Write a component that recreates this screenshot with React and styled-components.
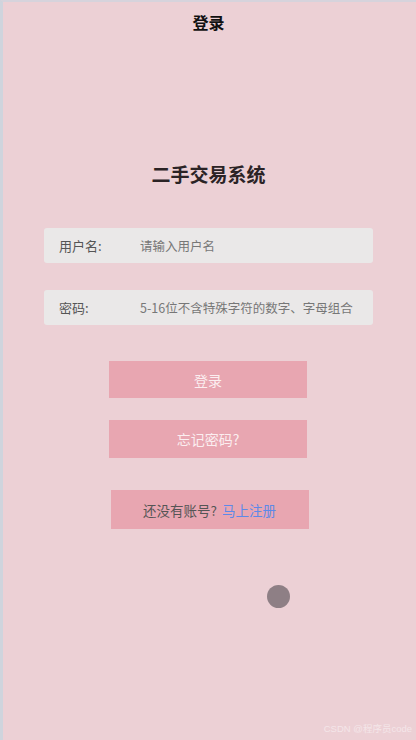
import React from 'react'
import styled, { createGlobalStyle } from 'styled-components'

const Global = createGlobalStyle`
  html, body { margin: 0; padding: 0; }
  body {
    font-family: "Noto Sans CJK SC", "Liberation Sans", sans-serif;
    background: #ecd0d5;
  }
`

const Screen = styled.div`
  position: relative;
  box-sizing: border-box;
  width: 416px;
  height: 740px;
  background: #ecd0d5;
  border-left: 3px solid #cfd4dd;
  border-top: 2px solid #d6d3dc;
  display: flex;
  flex-direction: column;
  align-items: center;
`

const NavTitle = styled.div`
  height: 44px;
  line-height: 44px;
  margin-top: -2px;
  margin-left: -2px;
  font-size: 16px;
  font-weight: 700;
  color: #111;
`

const AppName = styled.h1`
  margin: 116px 0 0 -2px;
  font-size: 19px;
  font-weight: 700;
  color: #2b2325;
  line-height: 28px;
`

const Form = styled.div`
  margin-top: 40px;
  width: 329px;
  margin-left: -2px;
  display: flex;
  flex-direction: column;
  gap: 27px;
`

const Field = styled.label`
  display: flex;
  align-items: center;
  height: 35px;
  background: #eae8e8;
  border-radius: 3px;
  padding-left: 15px;
  font-size: 13px;
  color: #555;
`

const FieldLabel = styled.span`
  width: 81px;
  flex-shrink: 0;
`

const Placeholder = styled.span`
  color: #777;
  white-space: nowrap;
  font-size: 12.5px;
`

const Actions = styled.div`
  margin-top: 36px;
  display: flex;
  flex-direction: column;
  align-items: center;
`

const Button = styled.div`
  width: ${p => p.$w || 198}px;
  height: ${p => p.$h || 38}px;
  margin-top: ${p => p.$mt || 0}px;
  margin-left: ${p => p.$ml || 0}px;
  background: #e8a6b1;
  color: ${p => (p.$dark ? '#555' : '#fbeef0')};
  font-size: ${p => (p.$dark ? 13.5 : 14)}px;
  display: flex;
  align-items: center;
  justify-content: center;
  gap: 5px;
`

const Link = styled.span`
  color: #5d89e8;
`

const Touch = styled.div`
  position: absolute;
  left: 264px;
  top: 583px;
  width: 23px;
  height: 23px;
  border-radius: 50%;
  background: #8e7f85;
  filter: blur(0.6px);
`

const Watermark = styled.div`
  position: absolute;
  right: 4px;
  bottom: 5px;
  font-size: 9.5px;
  color: #f4e6e9;
  font-family: "Liberation Sans", "Noto Sans CJK SC", sans-serif;
`

export default function App() {
  return (
    <>
      <Global />
      <Screen>
        <NavTitle>登录</NavTitle>
        <AppName>二手交易系统</AppName>
        <Form>
          <Field>
            <FieldLabel>用户名:</FieldLabel>
            <Placeholder>请输入用户名</Placeholder>
          </Field>
          <Field>
            <FieldLabel>密码:</FieldLabel>
            <Placeholder>5-16位不含特殊字符的数字、字母组合</Placeholder>
          </Field>
        </Form>
        <Actions>
          <Button $h={37} $ml={-3}>登录</Button>
          <Button $mt={22} $ml={-3}>忘记密码?</Button>
          <Button $mt={32} $h={39} $ml={0} $dark>
            还没有账号? <Link>马上注册</Link>
          </Button>
        </Actions>
        <Touch />
        <Watermark>CSDN @程序员code</Watermark>
      </Screen>
    </>
  )
}
